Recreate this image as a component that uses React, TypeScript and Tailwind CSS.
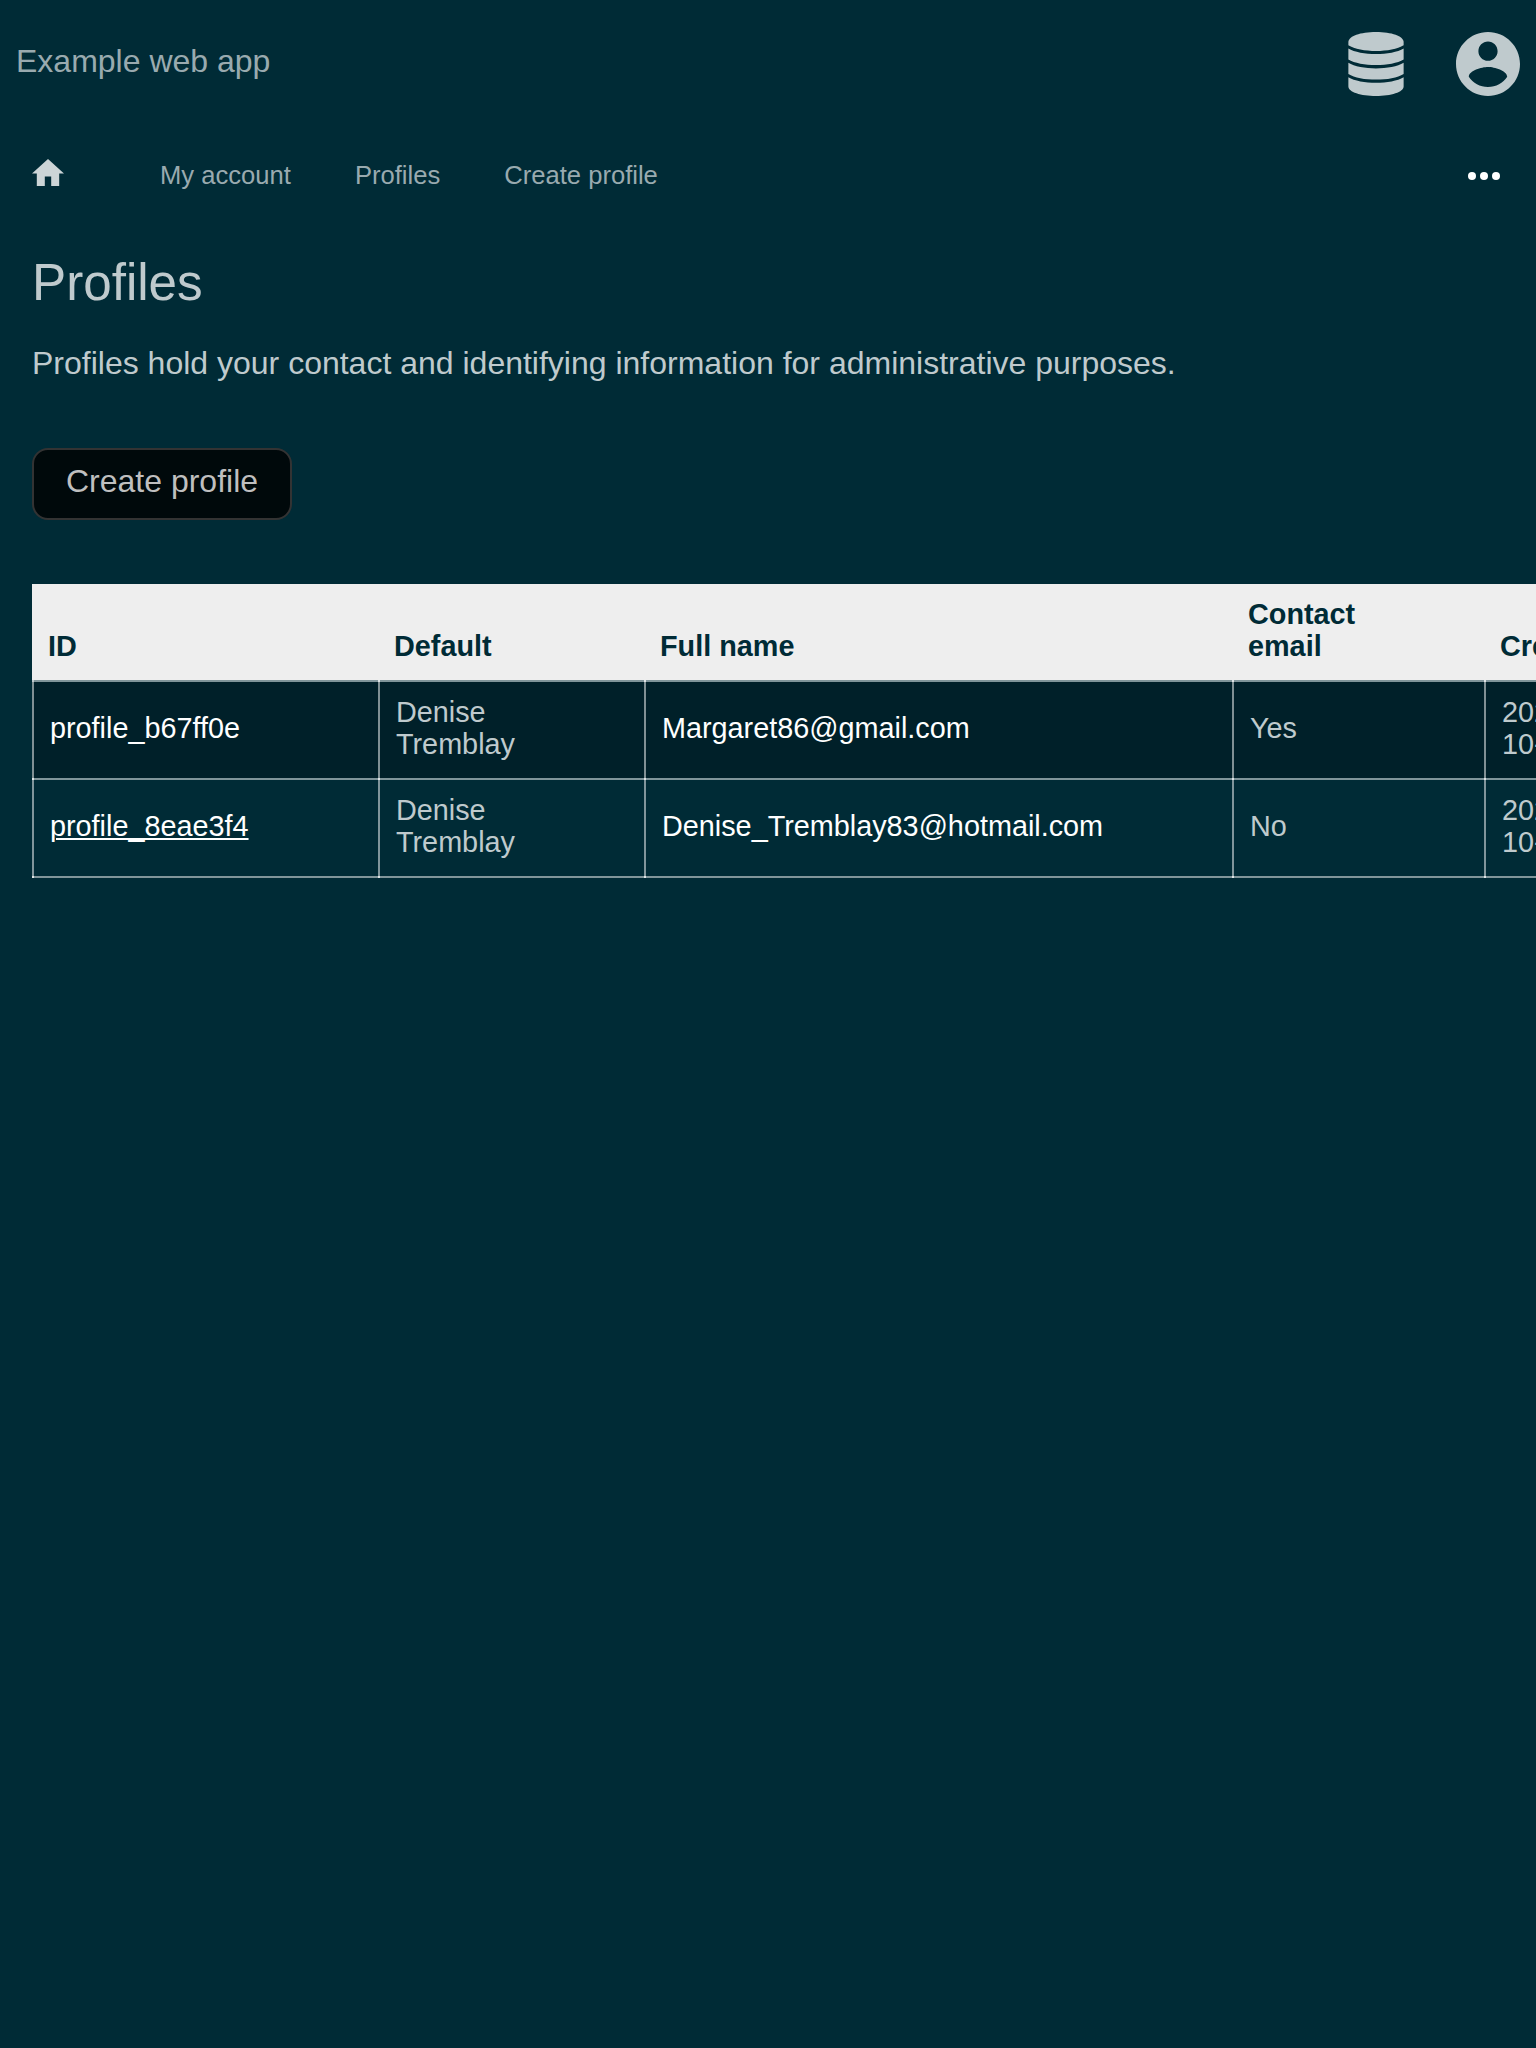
import React from "react";

const COLUMNS = ["ID", "Default", "Full name", "Contact email", "Created at"];

const ROWS = [
  {
    id: "profile_b67ff0e",
    name: "Denise Tremblay",
    email: "Margaret86@gmail.com",
    isDefault: "Yes",
    created: "2023-10-27",
    underline: false,
  },
  {
    id: "profile_8eae3f4",
    name: "Denise Tremblay",
    email: "Denise_Tremblay83@hotmail.com",
    isDefault: "No",
    created: "2023-10-27",
    underline: true,
  },
];

const GRID = "grid w-[1640px] grid-cols-[346px_266px_588px_252px_188px]";

function Cell({ children, className = "" }: { children: React.ReactNode; className?: string }) {
  return (
    <div className={`relative flex items-center border-l-2 border-white/50 px-4 pb-1 ${className}`}>
      {children}
      <span className="absolute -bottom-0.5 -left-0.5 h-0.5 w-0.5 bg-[#dfe5e6]" />
    </div>
  );
}

function Database() {
  return (
    <svg viewBox="0 0 448 512" className="h-16 w-14 fill-current">
      <path d="M3 80C3 33 100 0 224 0s221 33 221 80v26C350 167 98 167 3 106z" />
      <path d="M3 132C98 191 350 191 445 132v88C350 279 98 279 3 220z" />
      <path d="M3 246C98 306 350 306 445 246v89C350 396 98 396 3 335z" />
      <path d="M3 361C98 420 350 420 445 361v75C445 480 345 512 224 512S3 480 3 436z" />
    </svg>
  );
}

export default function App() {
  return (
    <div className="h-[2048px] w-[1536px] overflow-hidden bg-[#002b36] font-['Liberation_Sans',sans-serif] text-[32px] leading-9 text-[#bfcacd]">
      <header className="flex h-32 items-center justify-between px-4">
        <div className="pb-1.5 text-[#99aaaf]">Example web app</div>
        <div className="flex items-center gap-[52px]">
          <Database />
          <svg viewBox="2 2 20 20" className="h-16 w-16 fill-current">
            <path d="M12 2C6.480 2 2 6.480 2 12s4.480 10 10 10 10-4.480 10-10S17.520 2 12 2zm0 3c1.660 0 3 1.340 3 3s-1.340 3-3 3-3-1.340-3-3 1.340-3 3-3zm0 14.200c-2.500 0-4.710-1.280-6-3.220.030-1.990 4-3.080 6-3.080 1.990 0 5.970 1.090 6 3.080-1.290 1.940-3.500 3.220-6 3.220z" />
          </svg>
        </div>
      </header>

      <nav className="flex h-24 items-center px-8 text-[25.6px] leading-7 text-[#99aaaf]">
        <svg viewBox="2 3 20 17" className="-mt-[7px] mr-24 h-[27.2px] w-8 fill-[#ccd5d7]">
          <path d="M10 20v-6h4v6h5v-8h3L12 3 2 12h3v8z" />
        </svg>
        <div className="flex gap-16 pb-0.5">
          <span>My account</span>
          <span>Profiles</span>
          <span>Create profile</span>
        </div>
        <svg viewBox="0 0 32 8" className="ml-auto mr-1 h-2 w-8 fill-white">
          <circle cx="4" cy="4" r="4" />
          <circle cx="16" cy="4" r="4" />
          <circle cx="28" cy="4" r="4" />
        </svg>
      </nav>

      <main className="px-8 pt-[29px]">
        <h1 className="text-[51.2px] leading-[60px]">Profiles</h1>
        <p className="mt-8">Profiles hold your contact and identifying information for administrative purposes.</p>
        <button className="mt-[67px] flex h-[72px] w-[260px] items-center justify-center rounded-2xl border-2 border-[#333] bg-[#00090b] pb-1.5 text-[#bfbfbf]">
          Create profile
        </button>

        <section className="mt-16 text-[28.8px] leading-8">
          <div className={`${GRID} h-24 items-end bg-[#eee] pt-3.5 pb-[18px] font-bold text-[#002b36]`}>
            {COLUMNS.map((c) => (
              <div key={c} className={c === "Contact email" ? "w-40 px-4" : "px-4"}>
                {c}
              </div>
            ))}
          </div>
          <div className={`${GRID} h-0.5 bg-[#80959a]`}>
            {COLUMNS.map((c, i) => (
              <span key={c} className={i === 0 ? "w-0.5 bg-[#bfcacd]" : "w-0.5 bg-[#dfe5e6]"} />
            ))}
          </div>
          {ROWS.map((r) => (
            <div key={r.id} className={`${GRID} h-[98px] border-b-2 border-[#80959a] ${r.underline ? "" : "bg-[#002029]"}`}>
              <Cell className="text-white">
                <span className={r.underline ? "underline decoration-2 underline-offset-2" : ""}>{r.id}</span>
              </Cell>
              <Cell>
                <span className="w-32">{r.name}</span>
              </Cell>
              <Cell className="text-white">{r.email}</Cell>
              <Cell>{r.isDefault}</Cell>
              <Cell>
                <span className="w-20">{r.created}</span>
              </Cell>
            </div>
          ))}
        </section>
      </main>
    </div>
  );
}
